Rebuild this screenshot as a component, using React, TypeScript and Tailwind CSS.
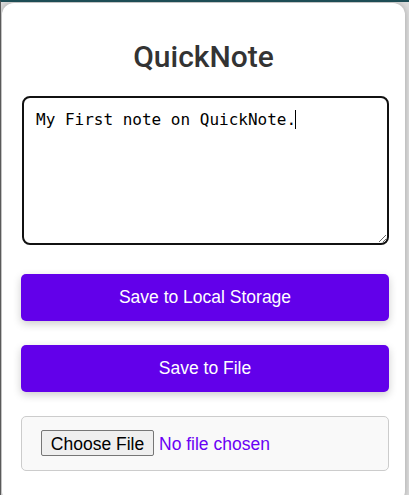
import { useState } from 'react';

export default function App() {
  const [note, setNote] = useState('My First note on QuickNote.');

  return (
    <div className="h-[495px] w-[409px] overflow-hidden bg-[#dcdcdc] border-t-2 border-t-[#1d4d55] border-l border-l-[#5a5a5a] pl-px pt-px">
      <div className="h-[500px] w-[403px] rounded-xl bg-white px-5 pt-[37px] shadow-[0_0_6px_rgba(0,0,0,0.25)] font-['Liberation_Sans',Arial,sans-serif]">
        {/* Title */}
        <h1 className="text-center text-[30px] leading-[34px] font-medium text-[#333] font-['Roboto',sans-serif]">
          QuickNote
        </h1>

        {/* Note */}
        <div className="relative mt-[22px]">
          <textarea
            value={note}
            onChange={(e) => setNote(e.target.value)}
            className="block h-[149px] w-[367px] rounded-lg border-2 border-[#111] pl-[12px] pr-3 py-3 text-[16px] leading-[19px] text-black font-['DejaVu_Sans_Mono',monospace] outline-none"
          />
          {/* caret */}
          <span className="pointer-events-none absolute left-[273px] top-[14px] h-[19px] w-px bg-black" />
        </div>

        {/* Actions */}
        <button className="mt-[29px] block h-[47px] w-[368px] -ml-px rounded-[5px] bg-[#6200ea] text-[17.5px] text-white shadow-[0_3px_8px_rgba(0,0,0,0.2)]">
          Save to Local Storage
        </button>
        <button className="mt-[24px] block h-[47px] w-[368px] -ml-px rounded-[5px] bg-[#6200ea] text-[17.5px] text-white shadow-[0_3px_8px_rgba(0,0,0,0.2)]">
          Save to File
        </button>

        {/* File picker */}
        <div className="mt-[24px] -ml-px flex h-[55px] w-[368px] items-center rounded-[5px] border border-[#ccc] bg-[#f9f9f9] px-[19px]">
          <input
            type="file"
            className="text-[17.5px] text-[#6a00f4] file:mr-[5px] file:h-[26px] file:w-[113px] file:rounded-[2px] file:border file:border-[#767676] file:bg-[#efefef] file:text-[17.5px] file:text-black"
          />
        </div>
      </div>
    </div>
  );
}
